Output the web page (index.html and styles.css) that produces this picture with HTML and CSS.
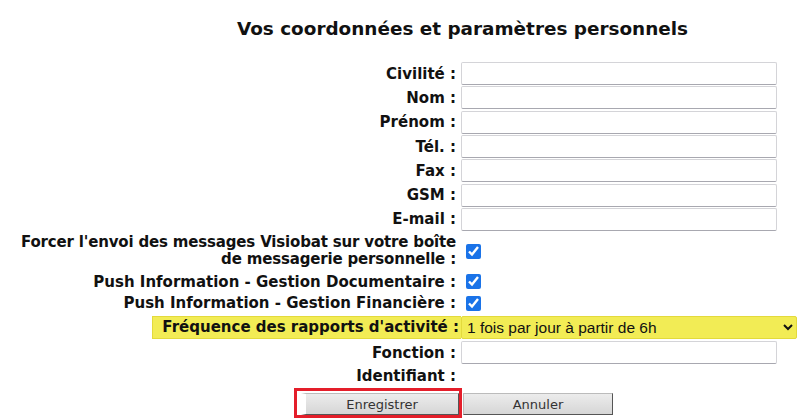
FILE: index.html
```html
<!DOCTYPE html>
<html lang="fr">
<head>
    <meta charset="UTF-8">
    <title>Vos coordonnées</title>
    <link rel="stylesheet" href="styles.css">
</head>
<body>
    <h2 class="title">Vos coordonnées et paramètres personnels</h2>

    <form class="params">
        <label class="lbl">Civilité :</label>
        <div class="field"><input type="text" class="txt"></div>

        <label class="lbl">Nom :</label>
        <div class="field"><input type="text" class="txt"></div>

        <label class="lbl">Prénom :</label>
        <div class="field"><input type="text" class="txt"></div>

        <label class="lbl">Tél. :</label>
        <div class="field"><input type="text" class="txt"></div>

        <label class="lbl">Fax :</label>
        <div class="field"><input type="text" class="txt"></div>

        <label class="lbl">GSM :</label>
        <div class="field"><input type="text" class="txt"></div>

        <label class="lbl">E-mail :</label>
        <div class="field"><input type="text" class="txt"></div>

        <label class="lbl lbl-multi">Forcer l'envoi des messages Visiobat sur votre boîte<br>de messagerie personnelle :</label>
        <div class="field check"><input type="checkbox" checked></div>

        <label class="lbl lbl-doc">Push Information - Gestion Documentaire :</label>
        <div class="field check"><input type="checkbox" checked></div>

        <label class="lbl lbl-fin">Push Information - Gestion Financière :</label>
        <div class="field check"><input type="checkbox" checked></div>

        <div class="lbl lbl-freq"><span class="hl">Fréquence des rapports d'activité :</span></div>
        <div class="field"><select class="sel hl-sel"><option>1 fois par jour à partir de 6h</option></select></div>

        <label class="lbl">Fonction :</label>
        <div class="field"><input type="text" class="txt"></div>

        <label class="lbl lbl-id">Identifiant :</label>
        <div class="field"></div>

        <div class="actions">
            <span class="focus-box"><button type="submit" class="btn btn-save">Enregistrer</button></span>
            <button type="button" class="btn">Annuler</button>
        </div>
    </form>
</body>
</html>
```

FILE: styles.css
```css
body { margin: 0; font-family: "DejaVu Sans", Verdana, sans-serif; color: #111; background: #fff; }
.title { margin: 14px 0 0 237px; font-size: 18.4px; font-weight: bold; height: 30px; line-height: 30px; }
.params { display: grid; grid-template-columns: 458px 343px; row-gap: 1px; margin-top: 18px; }
.lbl { font-weight: bold; font-size: 15px; padding-right: 2px; display: flex; align-items: center; justify-content: flex-end; text-align: right; height: 23.3px; white-space: nowrap; }
.lbl-multi { height: 38px; line-height: 17px; letter-spacing: -0.17px; }
.lbl-doc { height: 21px; }
.lbl-fin { height: 20px; }
.lbl-freq { height: 26px; }
.lbl-id { height: 21px; }
.field { display: flex; align-items: center; padding-left: 3px; }
.txt { width: 316px; height: 23px; box-sizing: border-box; border: 1px solid #d4d4d8; border-bottom-color: #a8a8b0; border-radius: 2px; margin: 0; }
.check input { width: 15px; height: 15px; margin: 0 0 0 5px; accent-color: #1a73e8; }
.hl { background: #f2ec55; border: 1px solid #e3da3c; border-right: 0; padding: 2px 2px 2px 9px; margin-right: -5px; line-height: 17px; }
.sel { width: 336px; height: 23px; font-family: "Liberation Sans", Arial, sans-serif; font-size: 15.5px; color: #111; border: 1px solid #e3da3c; border-radius: 2px; margin: 0; padding-left: 1px; }
.hl-sel { background: #f2ec55; }
.actions { grid-column: 1 / 3; display: flex; padding-left: 294px; margin-top: 1px; }
.focus-box { border: 3px solid #e41e2a; padding: 2px 0 0 4px; display: flex; }
.btn { font-family: "DejaVu Sans", Verdana, sans-serif; font-size: 13px; color: #333; background: linear-gradient(#ececec, #d6d6d6); border: 1px solid #bbb; border-right-color: #555; border-bottom-color: #555; height: 22px; margin: 0; padding: 0; }
.btn-save { width: 158px; border-left: 5px solid #fff; }
.actions > .btn { width: 150px; margin-top: 5px; margin-left: 1px; }
```
